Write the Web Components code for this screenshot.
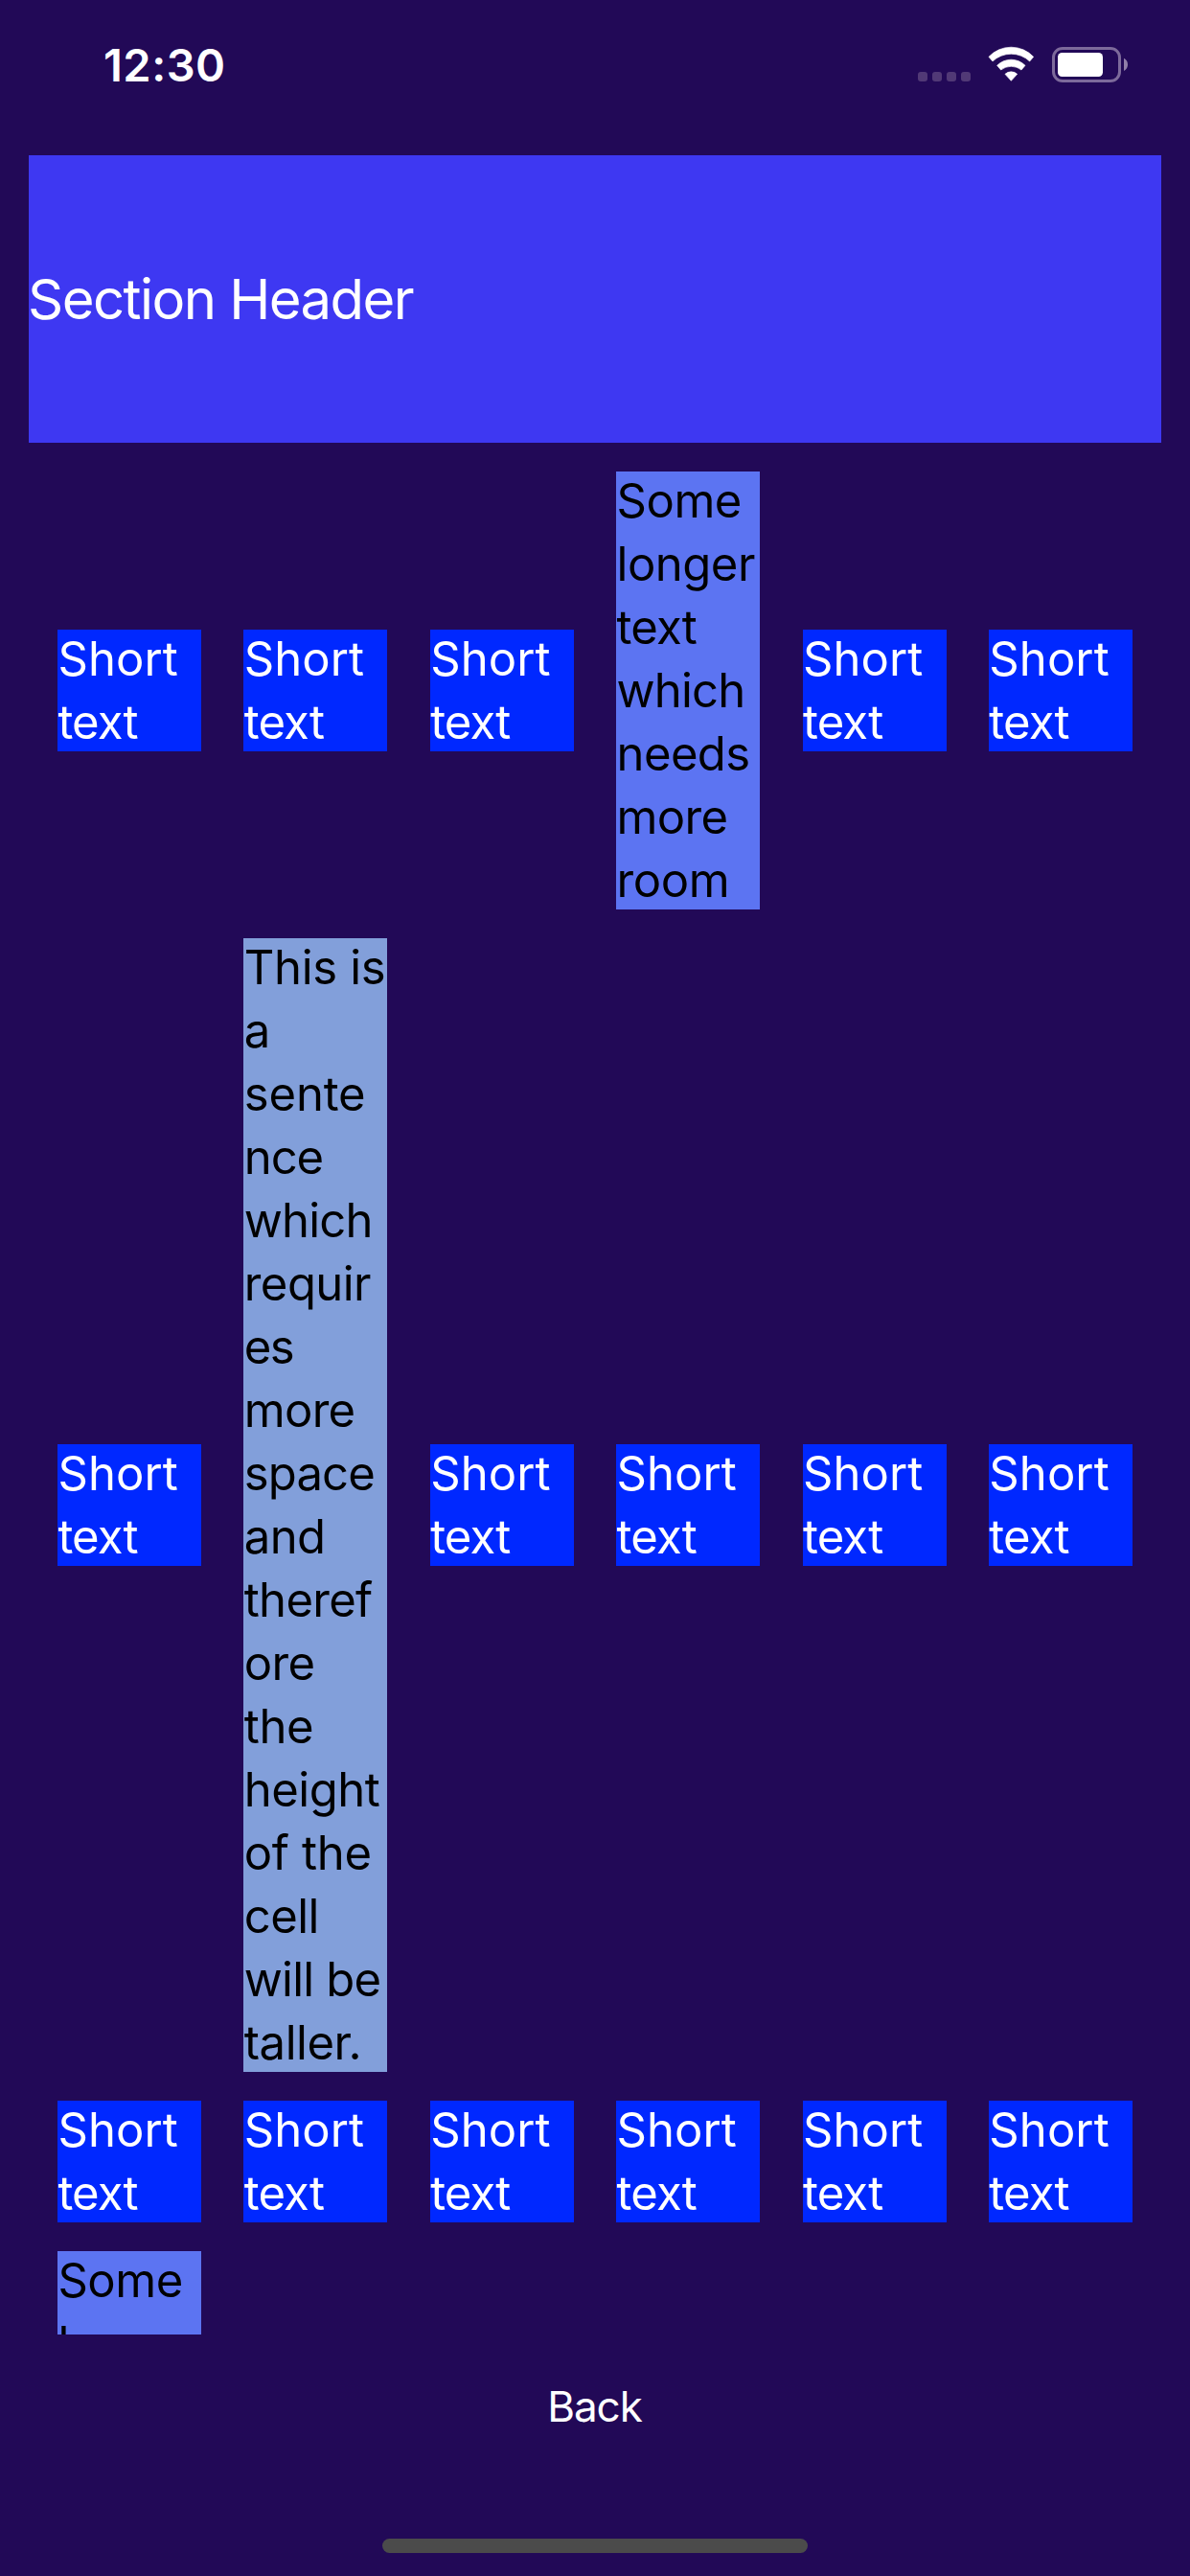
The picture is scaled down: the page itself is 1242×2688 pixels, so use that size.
<!DOCTYPE html>
<html lang="en">
<head>
<meta charset="utf-8">
<title>Grid</title>
<style>
html,body{margin:0;background:#220957}
</style>
</head>
<body>
<grid-screen></grid-screen>
<script>
const define = (name, html, setup) => customElements.define(name, class extends HTMLElement {
  connectedCallback() {
    if (this.shadowRoot) return;
    const root = this.attachShadow({ mode: 'open' });
    root.innerHTML = html;
    if (setup) setup(this, root);
  }
});

define('status-bar', `
<style>
:host{display:flex;height:162px;box-sizing:border-box;padding:0 64px 0 108px;justify-content:space-between;align-items:flex-start}
time{font-weight:600;font-size:47px;line-height:56px;letter-spacing:.5px;margin-top:40px}
.icons{display:flex;margin-top:48px}
svg{display:block}
</style>
<time>12:30</time>
<div class="icons">
<svg width="220" height="40" viewBox="0 0 220 40">
<g fill="#513976"><rect y="27" width="10" height="10" rx="3"/><rect x="15" y="27" width="10" height="10" rx="3"/><rect x="30" y="27" width="10" height="10" rx="3"/><rect x="45" y="27" width="10" height="10" rx="3"/></g>
<g fill="#fff" stroke="#fff" stroke-width="2" stroke-linejoin="round" transform="translate(-38 -28) scale(.33333)">
<path d="M336 118A96 96 0 0 1 476 118L464 132A84 84 0 0 0 348 132Z"/>
<path d="M362 145A62 62 0 0 1 450 145L438 159A51 51 0 0 0 374 159Z"/>
<path d="M387 172A28 28 0 0 1 425 172L406 193Z"/></g>
<rect x="141.5" y="2.500" width="69" height="34" rx="9.500" fill="none" stroke="#7d6a9b" stroke-width="3"/>
<rect x="146" y="7" width="47" height="25" rx="4.500" fill="#fff"/>
<path d="M215 12.700C217.700 14 219 16.500 219 19.200S217.700 24.700 215 26Z" fill="#917fa9"/>
</svg></div>`);

define('section-header', `
<style>
:host{display:flex;align-items:center;height:300px;margin:0 30px;background:#3e38f2;color:#fff;font-size:58px;line-height:70px;letter-spacing:-1.55px}
slot{display:block;margin-left:-1px}
</style><slot></slot>`);

// A cell takes its lines from the "lines" attribute: text:tracking, split by "|".
define('text-cell', `
<style>
:host{display:flow-root;width:150px;color:#fff;background:#0028ff;font-size:49px;line-height:66px}
:host([kind=medium]){background:#5c74f2;color:#000}
:host([kind=long]){background:#829fda;color:#000}
p{margin:-2px 0 -3px;padding-left:.4px;white-space:nowrap}
span{display:block}
</style><p></p>`, (host, root) => {
  const lines = host.getAttribute('lines') || 'Short:.07|text:-.85';
  for (const line of lines.split('|')) {
    const [text, tracking] = line.split(':');
    const span = document.createElement('span');
    span.textContent = text;
    span.style.letterSpacing = tracking + 'px';
    root.querySelector('p').append(span);
  }
});

define('grid-row', `
<style>
:host{display:grid;grid-template-columns:repeat(6,150px);justify-content:space-between;align-items:center;margin:0 60px}
</style><slot></slot>`);

define('home-indicator', `<style>:host{display:block;width:444px;height:15px;border-radius:7.5px;background:#4b4b4b;margin:0 auto}</style>`);

const medium = 'kind="medium" lines="Some:-.5|longer:-.5|text:-.85|which:-.8|needs:-.6|more:-.7|room:-.37"';
const long = 'kind="long" lines="This is:-.33|a:0|sente:-.16|nce:-1.1|which:-.8|requir:-.55|es:-1.6|more:-.7|space:-.85|and:-.58|theref:-.69|ore:-.6|the:-.35|height:-.49|of the:-.32|cell:-.58|will be:-.8|taller.:-.46"';
const partial = 'kind="medium" lines="Some:-.5|longer:-.5"';
const short = '<text-cell></text-cell>';

define('grid-screen', `
<style>
:host{display:flex;flex-direction:column;width:1242px;height:2688px;background:#220957;color:#fff;font-family:Inter,"Liberation Sans",sans-serif;overflow:hidden}
main{height:2274px;overflow:hidden;display:flex;flex-direction:column;gap:30px}
main>*{flex:none}
button{display:block;align-self:center;border:0;background:none;color:inherit;font:44px/54px Inter,sans-serif;letter-spacing:-1.1px;padding:0 1px 0 0;margin-top:48px}
.spacer{flex:1}
home-indicator{margin-bottom:24px}
</style>
<status-bar></status-bar>
<main>
<section-header>Section Header</section-header>
<grid-row>${short.repeat(3)}<text-cell ${medium}></text-cell>${short.repeat(2)}</grid-row>
<grid-row>${short}<text-cell ${long}></text-cell>${short.repeat(4)}</grid-row>
<grid-row>${short.repeat(6)}</grid-row>
<grid-row><text-cell ${partial}></text-cell></grid-row>
</main>
<button>Back</button>
<div class="spacer"></div>
<home-indicator></home-indicator>`);
</script>
</body>
</html>
